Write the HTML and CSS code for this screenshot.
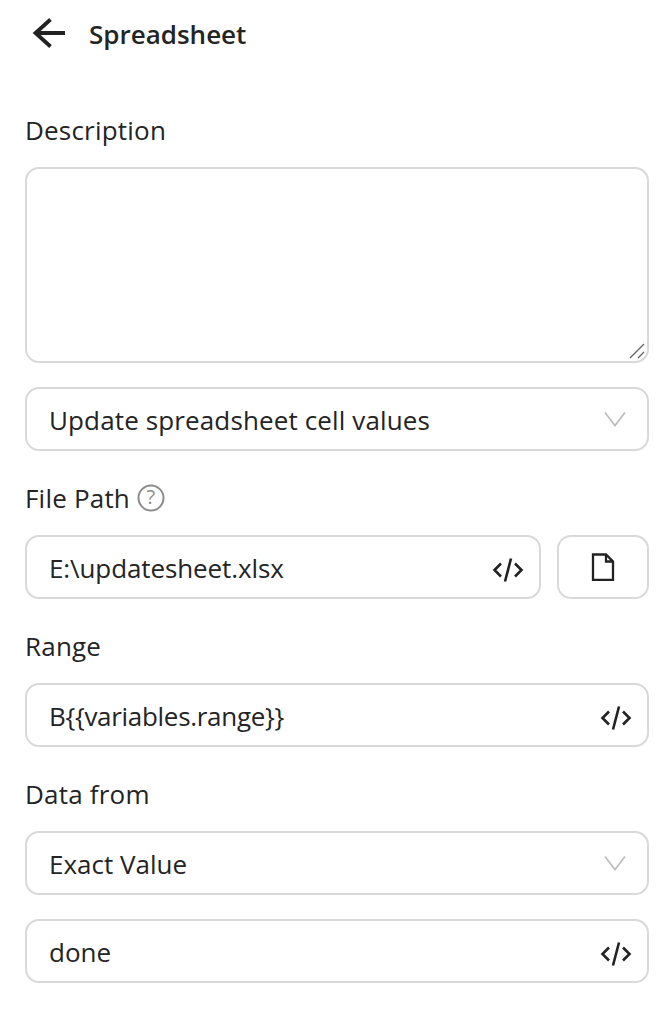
FILE: index.html
```html
<!DOCTYPE html>
<html lang="en">
<head>
<meta charset="utf-8">
<title>Spreadsheet</title>
<link rel="stylesheet" href="styles.css">
</head>
<body>
<header class="header">
  <svg class="back" viewBox="0 0 34 32" width="34" height="32"><path d="M33 16H3M18.500 2.500 3.500 16l15 13.500" fill="none" stroke="#222" stroke-width="3.800"/></svg>
  <h1 class="title">Spreadsheet</h1>
</header>
<form class="form">
  <div class="label first">Description</div>
  <div class="box textarea">
    <svg class="grip" viewBox="0 0 16 16" width="16" height="16"><path d="M1 15 15 1M9 15l6-6" stroke="#666" stroke-width="1.400" fill="none"/></svg>
  </div>
  <div class="box field gap-top">
    <span class="wide">Update spreadsheet cell values</span>
    <svg class="chev" viewBox="0 0 22 16" width="22" height="16"><path d="M1 1.500 11 14.500 21 1.500" fill="none" stroke="#bdbdbd" stroke-width="1.700"/></svg>
  </div>
  <div class="label"><span>File Path</span>
    <svg class="help" viewBox="0 0 28 28" width="28" height="28"><circle cx="14" cy="14" r="12.500" fill="none" stroke="#8c8c8c" stroke-width="2"/><text x="14" y="20" text-anchor="middle" class="help-q">?</text></svg>
  </div>
  <div class="row">
    <div class="box field grow"><span class="path">E:\updatesheet.xlsx</span><svg class="code" viewBox="0 0 32 24" width="32" height="24"><path d="M9 5.500 2.500 12 9 18.500M23 5.500 29.500 12 23 18.500M19 .5 13 23.500" fill="none" stroke="#222" stroke-width="2.600"/></svg></div>
    <div class="box file-btn"><svg viewBox="0 0 24 28" width="24" height="28"><path d="M2 1.500H15L22 8.500V27H2Z M15 1.500V8.500H22" fill="none" stroke="#222" stroke-width="2.300"/></svg></div>
  </div>
  <div class="label">Range</div>
  <div class="box field"><span class="tmpl">B{{variables.range}}</span><svg class="code" viewBox="0 0 32 24" width="32" height="24"><path d="M9 5.500 2.500 12 9 18.500M23 5.500 29.500 12 23 18.500M19 .5 13 23.500" fill="none" stroke="#222" stroke-width="2.600"/></svg></div>
  <div class="label">Data from</div>
  <div class="box field">
    <span>Exact Value</span>
    <svg class="chev" viewBox="0 0 22 16" width="22" height="16"><path d="M1 1.500 11 14.500 21 1.500" fill="none" stroke="#bdbdbd" stroke-width="1.700"/></svg>
  </div>
  <div class="box field gap-top"><span>done</span><svg class="code" viewBox="0 0 32 24" width="32" height="24"><path d="M9 5.500 2.500 12 9 18.500M23 5.500 29.500 12 23 18.500M19 .5 13 23.500" fill="none" stroke="#222" stroke-width="2.600"/></svg></div>
</form>
</body>
</html>
```
FILE: styles.css
```css
* { box-sizing: border-box; }
html, body { margin: 0; background: #fff; }
body {
  padding: 0 8px 0 25px;
  font-family: "Open Sans", "Noto Sans", sans-serif;
  font-size: 26px;
  color: #242424;
}
.header { display: flex; align-items: center; height: 68px; padding-left: 7px; }
.back { display: block; flex: none; margin-bottom: 2px; }
.title { margin: 0 0 0 23px; font-size: 26px; font-weight: 600; line-height: 36px; }
.form { display: flex; flex-direction: column; }
.label { display: flex; align-items: center; gap: 7px; height: 36px; margin: 29px 0 19px; line-height: 36px; letter-spacing: .2px; }
.label.first { margin-top: 44px; }
.box { border: 2px solid #d9d9d9; border-radius: 14px; background: #fff; }
.textarea { position: relative; height: 196px; }
.grip { position: absolute; right: 2px; bottom: 2px; }
.field { display: flex; align-items: center; justify-content: space-between; height: 64px; padding: 2px 15px 0 22px; line-height: 36px; }
.gap-top { margin-top: 24px; }
.wide { letter-spacing: .13px; }
.path { letter-spacing: -.1px; }
.tmpl { letter-spacing: -.3px; }
.chev { margin-right: 6px; margin-bottom: 3px; }
.code { margin-top: 4px; }
.help { display: block; }
.help-q { font-size: 20px; fill: #8c8c8c; font-family: "Open Sans", sans-serif; }
.row { display: flex; gap: 16px; }
.grow { flex: 1; }
.file-btn { display: flex; align-items: center; justify-content: center; width: 92px; height: 64px; flex: none; }
```
